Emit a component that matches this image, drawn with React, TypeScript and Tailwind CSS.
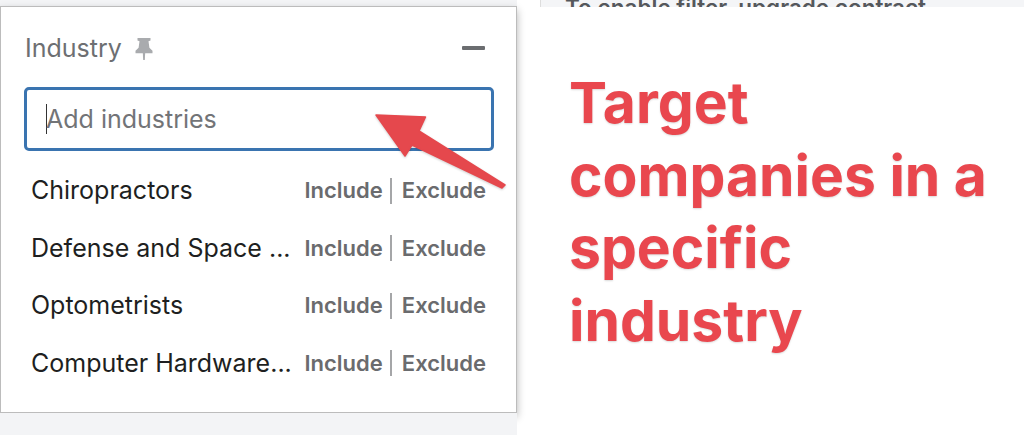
const rows = ["Chiropractors", "Defense and Space ...", "Optometrists", "Computer Hardware..."]

function PinIcon() {
  return (
    <svg width="20" height="24" viewBox="0 0 20 24" className="ml-[12px] mt-[1px]" fill="#a9abae">
      <path d="M3.500 1h13v2.600l-2 .6.9 6.600 3.100 3v2.400H1.500v-2.400l3.100-3 .9-6.600-2-.6z" />
      <path d="M8.800 16h2.400l-.4 7h-1.600z" />
    </svg>
  )
}

function ArrowOverlay() {
  return (
    <svg width="520" height="200" viewBox="0 0 520 200" className="absolute left-0 top-0" style={{ filter: "drop-shadow(0 1px 1px rgba(0,0,0,0.2))" }}>
      <path
        d="M376 115 L425.500 117 L419 131 L505 185 L502 188 L412 145 L405 156 Z"
        fill="#e5484d"
        stroke="#e5484d"
        strokeWidth="1.500"
        strokeLinejoin="round"
      />
    </svg>
  )
}

export default function App() {
  return (
    <div className="relative flex h-[435px] w-[1024px] flex-col overflow-hidden bg-white font-['Inter',sans-serif]">
      <div className="flex h-[7px] shrink-0">
        <div className="w-[517px] bg-[#f3f4f6]" />
        <div className="w-[23px] bg-white" />
        <div className="relative flex-1 overflow-hidden border-l border-[#dddddd] bg-[#f4f5f7]">
          <span className="absolute left-[24px] top-[-4px] whitespace-nowrap text-[22.500px] font-semibold leading-[24px] text-[#55585c]">
            To enable filter, upgrade contract
          </span>
        </div>
      </div>
      <div className="flex flex-1">
        <div className="flex w-[517px] shrink-0 flex-col">
          <div className="-mt-px h-[407px] border border-[#bcbcbc] bg-white px-[24px] pt-[26px] shadow-[0_4px_8px_rgba(0,0,0,0.3)]">
            <div className="flex h-[30px] items-center">
              <span className="text-[25px] leading-[30px] text-[#6d6f72]">Industry</span>
              <PinIcon />
              <div className="ml-auto mr-[7px] h-[4px] w-[23px] rounded-[1px] bg-[#6b6d70]" />
            </div>
            <div className="mt-[24px] flex h-[64px] w-[470px] -translate-x-px items-center rounded-[5px] border-[3px] border-[#3a74b0] bg-white pl-[19px] text-[25px] text-[#727477]">
              <span className="h-[30px] w-[1px] bg-[#333333]" />
              <span className="-ml-px pt-[2px]">Add industries</span>
            </div>
            <div className="mt-[11px] flex flex-col pl-[6px] pr-[6px]">
              {rows.map((name) => (
                <div key={name} className="flex h-[57.500px] items-center justify-between">
                  <span className="text-[25px] text-[#1e1f21]">{name}</span>
                  <div className="flex items-center text-[22px] font-semibold text-[#6a6b6e]">
                    <span>Include</span>
                    <span className="ml-[7px] mr-[10px] h-[26px] w-[2px] bg-[#a5a6a8]" />
                    <span>Exclude</span>
                  </div>
                </div>
              ))}
            </div>
          </div>
          <div className="flex-1 bg-[#f3f4f6]" />
        </div>
        <div className="pl-[52px] pt-[60px] text-[57px] font-bold leading-[72.500px] text-[#e9474e] [text-shadow:0_1px_2px_rgba(0,0,0,0.15)]">
          <p>Target</p>
          <p>companies in a</p>
          <p>specific</p>
          <p>industry</p>
        </div>
      </div>
      <ArrowOverlay />
    </div>
  )
}
